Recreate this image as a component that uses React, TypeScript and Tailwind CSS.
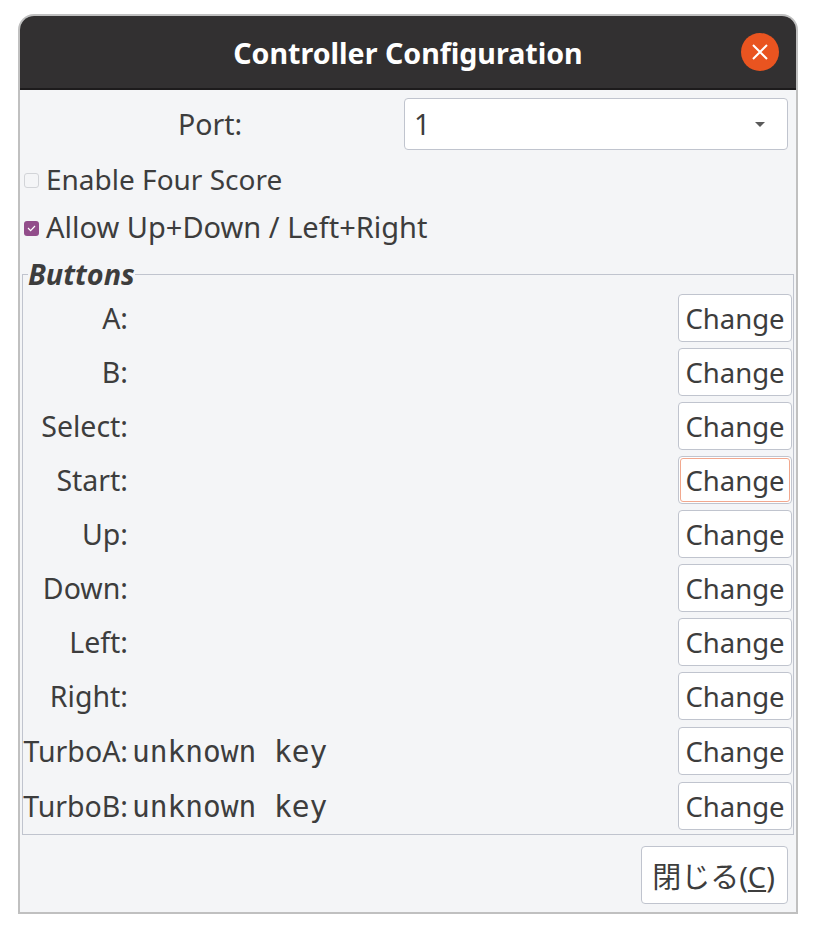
import React from 'react';

const UI_FONT = "font-['Noto_Sans','Noto_Sans_CJK_JP',sans-serif]";

const rows = [
  { label: 'A:', value: '', rowClass: 'h-[54px]' },
  { label: 'B:', value: '', rowClass: 'h-[54px]' },
  { label: 'Select:', value: '', rowClass: 'h-[54px]' },
  { label: 'Start:', value: '', rowClass: 'h-[54px]', focused: true },
  { label: 'Up:', value: '', rowClass: 'h-[54px]' },
  { label: 'Down:', value: '', rowClass: 'h-[54px]' },
  { label: 'Left:', value: '', rowClass: 'h-[54px]' },
  { label: 'Right:', value: '', rowClass: 'h-[55px]' },
  { label: 'TurboA:', value: 'unknown key', rowClass: 'h-[55px]' },
  { label: 'TurboB:', value: 'unknown key', rowClass: 'h-[54px]' },
];

const ChangeButton: React.FC<{ focused?: boolean }> = ({ focused }) => (
  <button className="relative w-[114px] h-[48px] shrink-0 pt-[2px] bg-white border border-[#c0c4ce] rounded-[4px] text-[27.5px] leading-none text-[#3d3d3d]">
    {focused && <span className="absolute inset-[1px] border border-[#f2a88e] rounded-[3px]" />}
    <span className="relative">Change</span>
  </button>
);

const App: React.FC = () => {
  return (
    <div className={`w-[816px] h-[932px] bg-white pt-[14px] pl-[18px] ${UI_FONT} text-[#3d3d3d]`}>
      <div className="w-[780px] h-[900px] border-2 border-[#c0c0c0] rounded-t-[16px] bg-[#f4f5f7] flex flex-col overflow-hidden">
        {/* title bar */}
        <div className="relative h-[74px] shrink-0 bg-[#323031] border-b-2 border-[#1d1b1c] flex items-center justify-center">
          <span className="text-[28.6px] font-bold text-white leading-none mt-[2px]">Controller Configuration</span>
          <button className="absolute right-[17px] top-[17px] w-[38px] h-[38px] rounded-full bg-[#e95420] flex items-center justify-center">
            <svg width="18" height="18" viewBox="0 0 18 18" fill="none" stroke="white" strokeWidth="2">
              <path d="M2 2 L16 16 M16 2 L2 16" />
            </svg>
          </button>
        </div>

        {/* port */}
        <div className="flex h-[52px] mt-[8px] shrink-0 items-center">
          <div className="w-[380px] text-center text-[28.5px]">Port:</div>
          <div className="ml-[4px] w-[384px] h-[52px] bg-white border border-[#c0c4ce] rounded-[4px] flex items-center justify-between pl-[9px] pr-[22px] text-[28.5px]">
            <span>1</span>
            <span className="w-0 h-0 border-x-[5px] border-x-transparent border-t-[5px] border-t-[#5a5a5a]" />
          </div>
        </div>

        {/* options */}
        <div className="flex items-center h-[48px] mt-[5px] pl-[4px] shrink-0 text-[28px]">
          <span className="w-[15px] h-[15px] mr-[7px] mt-[2px] bg-[#f4f5f7] border border-[#d2d4d8] rounded-[3px]" />
          <span>Enable Four Score</span>
        </div>
        <div className="flex items-center h-[48px] pl-[4px] shrink-0 text-[29px]">
          <span className="w-[15px] h-[15px] mr-[7px] mt-[2px] bg-[#924d8b] rounded-[3px] flex items-center justify-center">
            <svg width="11" height="11" viewBox="0 0 11 11" fill="none" stroke="white" strokeWidth="1.2">
              <path d="M2 5 L4.6 7.6 L9 3" />
            </svg>
          </span>
          <span>Allow Up+Down / Left+Right</span>
        </div>

        {/* buttons frame */}
        <fieldset className="mt-[7px] mx-[2px] w-[772px] h-[577px] shrink-0 border border-[#c0c4ce] pl-[1px] pr-[1px]">
          <legend className="ml-[4px] h-[32px] text-[28.8px] font-bold italic leading-[32px] text-[#3d3d3d]">Buttons</legend>
          <div className="mt-[4px] flex flex-col">
            {rows.map(r => (
              <div key={r.label} className={`flex items-start shrink-0 ${r.rowClass}`}>
                <div className="w-[104px] h-[48px] shrink-0 flex items-center justify-end text-[28.5px]">{r.label}</div>
                <div className="flex-1 h-[50px] pl-[4px] flex items-center font-['DejaVu_Sans_Mono',monospace] text-[29.5px] whitespace-pre">{r.value}</div>
                <ChangeButton focused={r.focused} />
              </div>
            ))}
          </div>
        </fieldset>

        {/* footer */}
        <div className="flex justify-end pr-[8px] mt-[11px]">
          <button className="w-[147px] h-[58px] pt-[3px] pr-[2px] bg-white border border-[#c0c4ce] rounded-[4px] text-[29px] text-[#3d3d3d]">
            閉じる(<span className="underline">C</span>)
          </button>
        </div>
      </div>
    </div>
  );
};

export default App;
